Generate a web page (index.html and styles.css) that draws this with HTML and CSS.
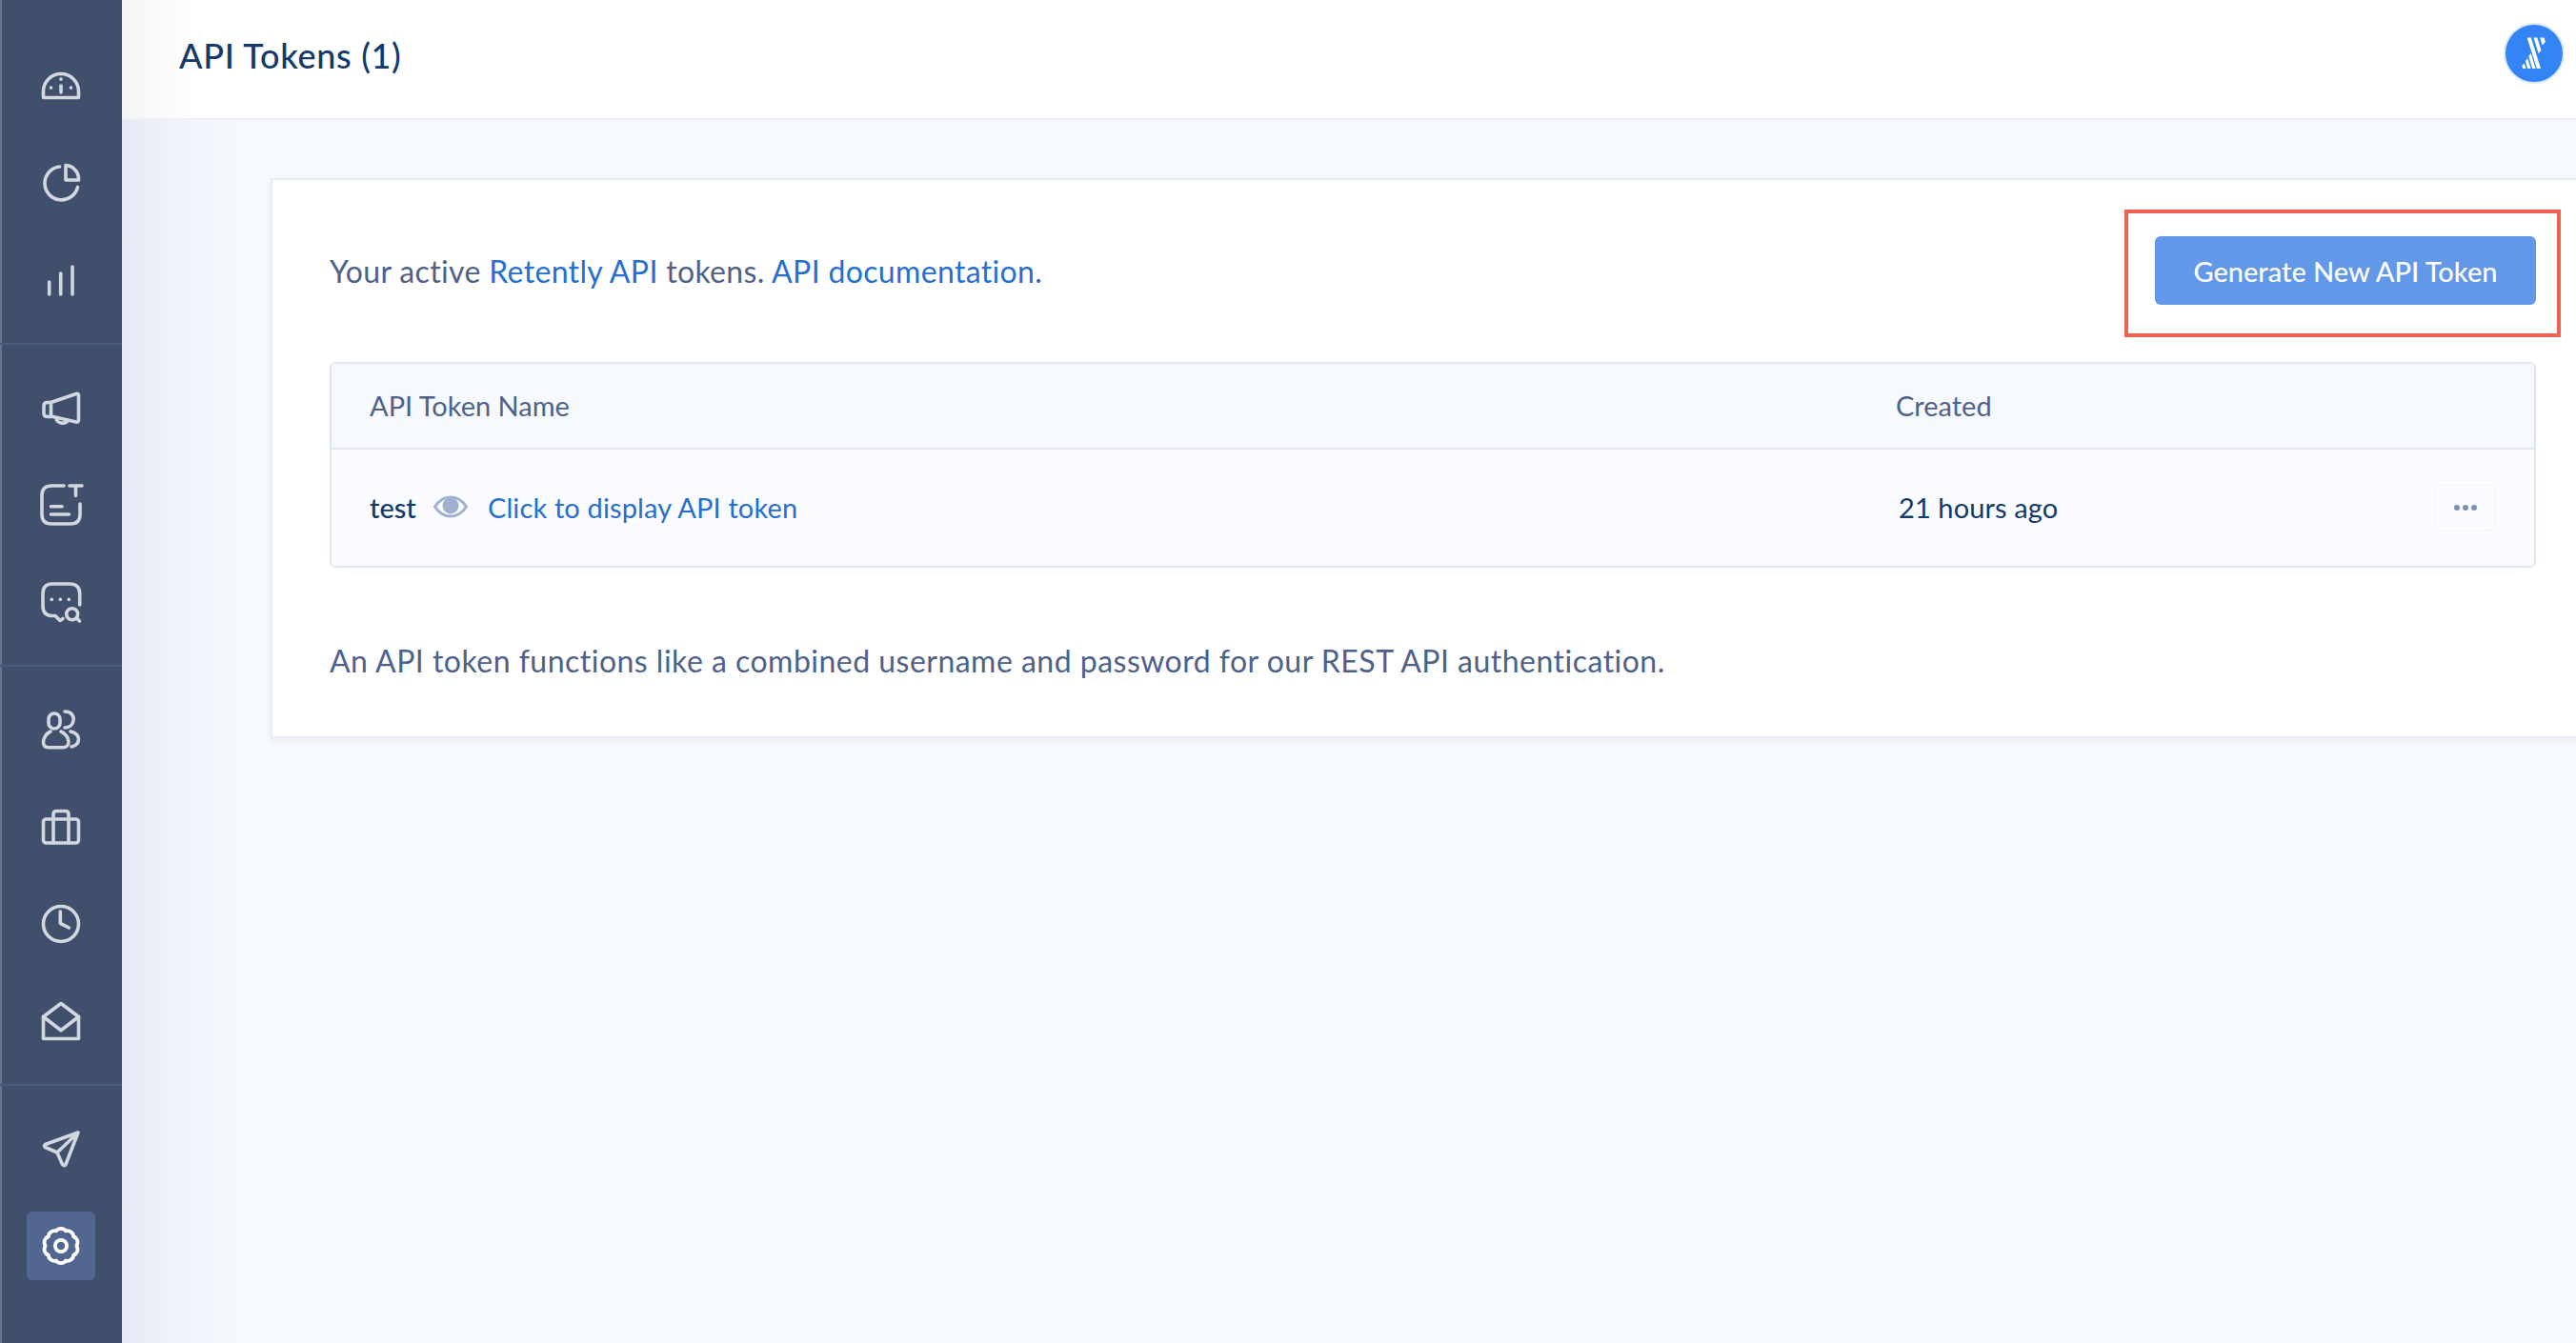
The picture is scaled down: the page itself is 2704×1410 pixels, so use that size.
FILE: index.html
```html
<!DOCTYPE html>
<html lang="en">
<head>
  <meta charset="UTF-8">
  <title>API Tokens</title>
  <link rel="stylesheet" href="styles.css">
</head>
<body>
  <nav class="sidebar">
    <div class="nav-group first">
      <a class="nav-item"><svg class="icon" viewBox="0 0 40 40"><path d="M1.5 32.5V26a18.5 18.5 0 0 1 37 0v6.500z"/><path d="M20 20v7M9.500 22v.1M30.500 22v.1M20 13v.1"/></svg></a>
      <a class="nav-item"><svg class="icon" viewBox="0 0 40 40"><path d="M18.500 3A17.500 17.500 0 1 0 37.500 24.500"/><path d="M25 1.500A14.500 14.500 0 0 1 38.500 17H25z"/></svg></a>
      <a class="nav-item"><svg class="icon" viewBox="0 0 40 40"><path d="M7.700 22v13M19.700 13v22M32 6v29"/></svg></a>
    </div>
    <div class="nav-group">
      <a class="nav-item"><svg class="icon" viewBox="0 0 40 40"><path d="M9.500 14.500L36 5.500q2.500-.5 2.500 1.500V33q0 2.500-2.500 2L9.500 29z"/><path d="M9.500 14.500H6q-4 0-4 3.500v8q0 3.500 4 3.500h3.500"/><path d="M15 31c1 6 10 7 12 2"/></svg></a>
      <a class="nav-item"><svg class="icon" viewBox="0 0 40 40"><path d="M23 0H10Q0 0 0 10v20q0 10 10 10h20q10 0 10-10V19"/><path d="M29 0h13M35.500 0v10.500M9.500 21.700H21M9.500 30h19"/></svg></a>
      <a class="nav-item"><svg class="icon" viewBox="0 0 40 40"><path d="M39.700 23V11Q39.700 1 29 1H11Q1 1 1 11v13q0 10 9 10.500h4l5 5 3-2"/><circle cx="31.700" cy="32.700" r="6"/><path d="M36.500 37l3 3M10.300 17.300v.1M19.300 17.300v.1M28.300 17.300v.1"/></svg></a>
    </div>
    <div class="nav-group">
      <a class="nav-item"><svg class="icon" viewBox="0 0 40 40"><rect x="7" y="3" width="12" height="16" rx="6"/><path d="M9 22c-5 2-7.500 8-7.500 11 0 4 2.500 5.700 5.500 5.700h15c4 0 6-2.700 6-5.700 0-4-3-9-8-11"/><path d="M24 1c7 0 10 5 9 9.500-.5 4.500-4 7.500-9 7.500M30 22c6 1 8.500 5 8.500 8 0 4-2.500 7-7.500 8"/></svg></a>
      <a class="nav-item"><svg class="icon" viewBox="0 0 40 40"><rect x="1.500" y="12" width="37" height="25" rx="3"/><path d="M12 37V7q0-3.500 3.500-3.500h9Q28 3.500 28 7v30"/></svg></a>
      <a class="nav-item"><svg class="icon" viewBox="0 0 40 40"><circle cx="20" cy="20" r="18.500"/><path d="M19.300 7v12.300l9 4.700"/></svg></a>
      <a class="nav-item"><svg class="icon" viewBox="0 0 40 40"><path d="M1.500 38.500V15.500L20 1.500l18.500 14v23z"/><path d="M1.500 15.500L20 29.700l18.500-14.200"/></svg></a>
    </div>
    <div class="nav-group last">
      <a class="nav-item"><svg class="icon" viewBox="0 0 40 40"><path d="M38 3L3.500 15.500q-2 1.500 0 3L16 24l5.500 12.500q2 2.500 3.500 0zM38 3L16 24"/></svg></a>
      <a class="nav-item"><span class="nav-active"><svg class="icon gear" viewBox="1 1 38 38"><path d="M24.800 5.260A6 6 0 0 1 32.540 10.890 6 6 0 0 1 35.500 20 6 6 0 0 1 32.540 29.110 6 6 0 0 1 24.800 34.740 6 6 0 0 1 15.200 34.740 6 6 0 0 1 7.460 29.110 6 6 0 0 1 4.500 20 6 6 0 0 1 7.460 10.890 6 6 0 0 1 15.200 5.260 6 6 0 0 1 24.800 5.260z"/><circle cx="20" cy="20" r="5.800"/></svg></span></a>
    </div>
  </nav>

  <div class="main">
    <header class="topbar">
      <h1 class="page-title">API Tokens (1)</h1>
      <div class="avatar">
        <svg viewBox="0 0 60 60"><path d="M22.600 13.500h4.200L37 46h-4zM29.500 13.500h3.800L37.500 27l-2.900 3zM36.200 13.500h4.300l1.400 4.500-3.300 3.500zM24.300 33l2.400-3 4.900 16h-3.400zM20.800 38l2.400-2.800L26.600 46h-3.400zM17.300 43l2.300-2.600 2 5.600h-3.400z"/></svg>
      </div>
    </header>

    <section class="content">
      <div class="card">
        <div class="intro">
          <p class="text">Your active <a class="link">Retently API</a> tokens. <a class="link">API documentation.</a></p>
          <div class="btn-wrap">
            <button class="btn-primary">Generate New API Token</button>
            <span class="highlight"></span>
          </div>
        </div>

        <div class="token-table">
          <div class="table-head">
            <div class="col-name">API Token Name</div>
            <div>Created</div>
          </div>
          <div class="table-row">
            <div class="col-name token-cell">
              <span class="token-name">test</span>
              <svg class="eye" viewBox="0 0 36 24"><path d="M1.500 12C6 5 11.500 2 18 2s12 3 16.500 10C30 19 24.500 22 18 22S6 19 1.500 12z"/><circle cx="18" cy="11" r="8.500"/></svg>
              <a class="link">Click to display API token</a>
            </div>
            <div class="col-date">21 hours ago</div>
            <div class="more"><span></span><span></span><span></span></div>
          </div>
        </div>

        <p class="text note">An API token functions like a combined username and password for our REST API authentication.</p>
      </div>
    </section>
  </div>
</body>
</html>
```

FILE: styles.css
```css
* { box-sizing: border-box; margin: 0; padding: 0; }
html, body { width: 100%; height: 100%; }
body {
  display: flex; overflow: hidden;
  font-family: "Lato", "Noto Sans", sans-serif; color: #4e6189;
  background: #f6f9fd;
}

/* sidebar */
.sidebar {
  width: 128px; flex-shrink: 0; height: 100%;
  background: #3f4f6c; border-left: 2px solid #68748d;
}
.nav-group { padding: 15px 0; border-bottom: 2px solid #4a5c7e; margin-left: -2px; }
.nav-group.first { padding-top: 39px; }
.nav-group.last { border-bottom: 0; }
.nav-item { display: flex; align-items: center; justify-content: center; height: 102px; }
.nav-active {
  display: flex; align-items: center; justify-content: center;
  width: 72px; height: 72px; border-radius: 6px; background: #52678f;
}
.icon {
  width: 40px; height: 40px; overflow: visible;
  fill: none; stroke: #d3d7df; stroke-width: 3.6; stroke-linecap: round; stroke-linejoin: round;
}
.icon.gear { stroke: #fff; }

/* main column */
.main { flex: 1; min-width: 0; display: flex; flex-direction: column; }
.topbar {
  height: 126px; flex-shrink: 0; padding: 0 12px 8px 60px;
  display: flex; align-items: center; justify-content: space-between;
  background: linear-gradient(90deg, #f4f5f7 0, #fff 80px);
  border-bottom: 2px solid #eef0f4;
}
.page-title { font-size: 36px; font-weight: 500; color: #14396b; letter-spacing: 0.7px; }
.avatar {
  width: 64px; height: 64px; border-radius: 50%; margin-bottom: 4px;
  background: #3385f6; border: 2px solid #e2e8f1;
}
.avatar svg { display: block; width: 100%; height: 100%; fill: #fff; }

.content {
  flex: 1; padding: 61px 0 0 156px;
  background: linear-gradient(90deg, #e6eaf4 0, #f0f3fa 60px, #f6f9fd 130px);
}
.card {
  height: 588px; padding: 0 42px 0 60px;
  background: #fff; border: 2px solid #e9edf3; border-right: 0;
  box-shadow: 0 3px 6px rgba(80, 100, 140, 0.08);
}
.intro {
  display: flex; align-items: center; justify-content: space-between;
  padding: 59px 0 60px;
}
.text { font-size: 32px; color: #4e6189; letter-spacing: 0.34px; }
.link { color: #266fd0; text-decoration: none; }

/* the red box drawn over the screenshot */
.btn-wrap { position: relative; }
.highlight {
  position: absolute; top: -28px; left: -32px; right: -26px; bottom: -34px;
  border: 4px solid #ee6352;
}
.btn-primary {
  display: block; width: 400px; height: 72px;
  border: 0; border-radius: 6px; background: #6398e9; color: #fff;
  font-family: inherit; font-size: 29px; font-weight: 500;
}

/* table */
.token-table { border: 2px solid #e0e6ee; border-radius: 6px; background: #fafcff; font-size: 29px; }
.table-head {
  display: flex; align-items: center; height: 90px; padding-bottom: 2px;
  background: #f6f9fe; border-bottom: 2px solid #e0e6ee; border-radius: 6px 6px 0 0;
}
.table-row { display: flex; align-items: center; height: 122px; padding-bottom: 2px; color: #14396b; position: relative; }
.col-name { width: 1642px; padding-left: 40px; flex-shrink: 0; }
.token-cell { display: flex; align-items: center; }
.token-name { font-weight: 500; }
.token-cell .link { letter-spacing: 0.14px; }
.eye {
  width: 36px; height: 24px; margin: 0 21px 0 18px;
  fill: none; stroke: #9fb1cf; stroke-width: 3;
}
.eye circle { fill: #9fb1cf; stroke: none; }
.col-date { padding-left: 3px; letter-spacing: 0.1px; }
.more {
  position: absolute; right: 40px; top: 36px;
  display: flex; align-items: center; justify-content: center; gap: 3px;
  width: 65px; height: 50px;
  border: 2px solid #f6f8fc; border-radius: 6px;
}
.more span { width: 6px; height: 6px; border-radius: 50%; background: #7d93b7; }

.text.note { margin-top: 78px; letter-spacing: 0.48px; }
```
